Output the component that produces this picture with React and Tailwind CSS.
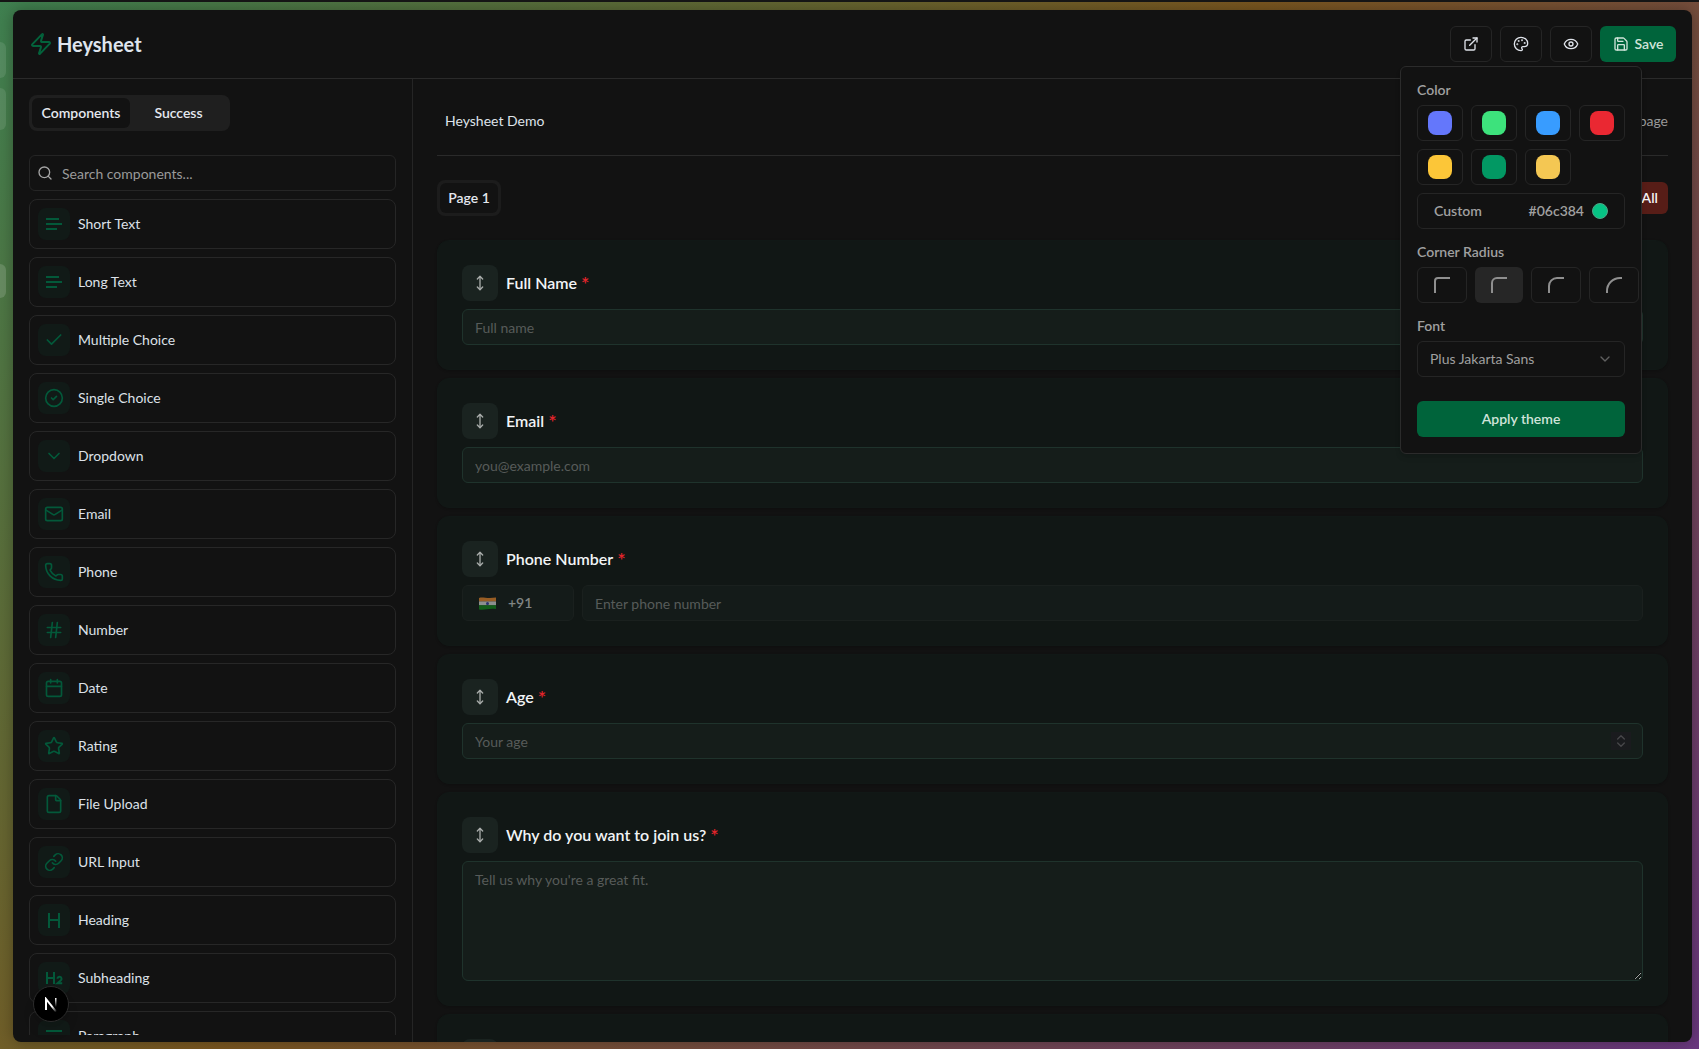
import React from "react";
import {
  Zap, ExternalLink, Palette, Eye, Save, Search, Check, CircleCheck, ChevronDown,
  Mail, Phone, Hash, Calendar, Star, File, Link, MoveVertical, ChevronsUpDown,
} from "lucide-react";

function TextLines({ className }) {
  return (
    <svg viewBox="0 0 20 20" className={className} fill="none" stroke="currentColor" strokeWidth="2">
      <path d="M2 5h13M2 10h16M2 15h11" />
    </svg>
  );
}

function HeadingIcon({ className }) {
  return (
    <svg viewBox="0 0 20 20" className={className} fill="none" stroke="currentColor" strokeWidth="2">
      <path d="M5 3v15M15 3v15M5 10h10" />
    </svg>
  );
}

function SubheadingIcon({ className }) {
  return (
    <svg viewBox="0 0 20 20" className={className} fill="none" stroke="currentColor" strokeWidth="2">
      <path d="M3 4v12M10 4v12M3 10h7M13.5 10.8a2 2 0 1 1 3.4 1.4L13.5 15.2H18.2" />
    </svg>
  );
}

function ParagraphIcon({ className }) {
  return (
    <svg viewBox="0 0 20 20" className={className} fill="none" stroke="currentColor" strokeWidth="2">
      <path d="M2 5h16M2 10h16M2 15h11" />
    </svg>
  );
}

const COMPONENTS = [
  ["Short Text", TextLines],
  ["Long Text", TextLines],
  ["Multiple Choice", Check],
  ["Single Choice", CircleCheck],
  ["Dropdown", ChevronDown],
  ["Email", Mail],
  ["Phone", Phone],
  ["Number", Hash],
  ["Date", Calendar],
  ["Rating", Star],
  ["File Upload", File],
  ["URL Input", Link],
  ["Heading", HeadingIcon],
  ["Subheading", SubheadingIcon],
  ["Paragraph", ParagraphIcon],
];

const SWATCHES = [
  ["Indigo", "bg-[#6477fb]"],
  ["Green", "bg-[#3de27c]"],
  ["Blue", "bg-[#389cff]"],
  ["Red", "bg-[#ea2832]"],
  ["Yellow", "bg-[#fcc638]"],
  ["Emerald", "bg-[#029863]"],
  ["Amber", "bg-[#f4c753]"],
];

const RADII = [
  ["Small", "M1 17V4a3 3 0 0 1 3-3h13"],
  ["Medium", "M1 17V6a5 5 0 0 1 5-5h11"],
  ["Large", "M1 17V9a8 8 0 0 1 8-8h8"],
  ["Full", "M1 17V14A13 13 0 0 1 14 1h3"],
];

const iconButton =
  "flex h-9 w-[42px] items-center justify-center rounded-md border border-[#252525] text-[#dfe3ea]";
const fieldBox =
  "w-full rounded-md border border-[#1f332c] bg-[#151d1a] px-3 text-sm text-[#ddd] placeholder:text-[#575b59]";

function Header() {
  return (
    <header className="flex items-center justify-between border-b border-[#2a2a2a] p-4">
      <div className="flex items-center gap-1 text-[#dfe5ee]">
        <Zap className="size-6 text-[#03623b]" strokeWidth={2} />
        <h1 className="text-xl font-bold">Heysheet</h1>
      </div>
      <div className="relative flex gap-2">
        <button aria-label="Open form" className={iconButton}><ExternalLink className="size-4" /></button>
        <button aria-label="Theme" className={iconButton}><Palette className="size-4" /></button>
        <button aria-label="Preview" className={iconButton}><Eye className="size-4" /></button>
        <button className="flex h-9 w-[76px] items-center justify-center gap-1.5 rounded-md bg-[#00643b] text-sm font-semibold text-[#cfe3d9]">
          <Save className="size-4" />Save
        </button>
        <ThemePopover />
      </div>
    </header>
  );
}

function ThemePopover() {
  return (
    <div className="absolute top-10 right-[34px] z-10 flex w-[242px] flex-col gap-4 rounded-md border border-[#2b2b2b] bg-[#121212] p-4 text-sm text-[#a0a0a0] shadow-md">
      <section className="flex flex-col gap-2">
        <h2 className="h-3.5 leading-3.5 font-semibold">Color</h2>
        <div className="grid grid-cols-4 gap-2">
          {SWATCHES.map(([name, color]) => (
            <button key={name} aria-label={name} className="flex h-9 items-center justify-center rounded-md border border-[#252525]">
              <span className={"size-6 rounded-lg " + color} />
            </button>
          ))}
        </div>
        <button className="flex h-9 items-center justify-between rounded-md border border-[#252525] px-4 font-semibold">
          <span>Custom</span>
          <span className="flex items-center gap-2">
            #06c384
            <span className="size-4 rounded-full border border-[#4fa587] bg-[#06c384]" />
          </span>
        </button>
      </section>
      <section className="flex flex-col gap-2">
        <h2 className="h-3.5 leading-3.5 font-semibold">Corner Radius</h2>
        <div className="flex gap-2">
          {RADII.map(([name, d], i) => (
            <button
              key={name}
              aria-label={name}
              className={
                i === 1
                  ? "flex h-9 w-12 shrink-0 items-center justify-center rounded-md bg-[#262626]"
                  : "flex h-9 w-[50px] shrink-0 items-center justify-center rounded-md border border-[#252525]"
              }
            >
              <svg viewBox="0 0 16 16" className="size-4" fill="none" stroke="#8f8f8f" strokeWidth="2">
                <path d={d} />
              </svg>
            </button>
          ))}
        </div>
      </section>
      <section className="flex flex-col gap-2">
        <label htmlFor="font" className="h-3.5 leading-3.5 font-semibold">Font</label>
        <div className="relative">
          <select id="font" className="h-9 w-full appearance-none rounded-md border border-[#252525] bg-transparent px-3">
            <option>Plus Jakarta Sans</option>
          </select>
          <ChevronDown className="pointer-events-none absolute top-2.5 right-3 size-4 text-[#606060]" />
        </div>
      </section>
      <button className="mt-2 h-9 rounded-md bg-[#00643b] font-semibold text-[#cfe3d9]">Apply theme</button>
    </div>
  );
}

function Sidebar() {
  return (
    <aside className="flex w-[400px] shrink-0 flex-col border-r border-[#252525] px-4 pt-4 pb-[7px]">
      <div role="tablist" className="flex h-9 w-[201px] shrink-0 rounded-lg bg-[#1f1f1f] p-[3px] text-sm font-semibold text-[#e4e8ef]">
        <button role="tab" aria-selected="true" className="w-[98px] rounded-md bg-[#121212]">Components</button>
        <button role="tab" aria-selected="false" className="flex-1">Success</button>
      </div>
      <div className="relative mt-6 shrink-0">
        <Search className="pointer-events-none absolute top-2.5 left-2 size-4 text-[#a5a5a5]" />
        <input aria-label="Search components" placeholder="Search components..." className="h-9 w-full rounded-md border border-[#252525] bg-transparent pr-3 pl-8 text-sm placeholder:text-[#9a9a9a]" />
      </div>
      <div className="mt-2 flex min-h-0 flex-1 flex-col gap-2 overflow-hidden">
        {COMPONENTS.map(([name, Icon]) => (
          <button key={name} className="flex shrink-0 items-center gap-2 rounded-lg border border-[#272727] p-2 text-left text-sm text-[#dde1e8]">
            <span className="flex size-8 items-center justify-center rounded-lg bg-[#111a17] text-[#03593a]">
              <Icon className="size-5" strokeWidth={2} />
            </span>
            {name}
          </button>
        ))}
      </div>
    </aside>
  );
}

function FieldCard({ id, label, children }) {
  return (
    <section className="flex shrink-0 flex-col gap-2 rounded-xl border border-[#111816] bg-[#111715] p-6 shadow-sm">
      <div className="flex items-center gap-2">
        <button aria-label="Move field" className="flex size-9 items-center justify-center rounded-lg bg-[#1a2320] text-[#a8acaa]">
          <MoveVertical className="size-4" />
        </button>
        {label && (
          <label htmlFor={id} className="flex gap-1 text-base font-semibold text-[#f1f4f6]">
            {label}
            <span className="text-xl leading-6 text-[#e3242b]">*</span>
          </label>
        )}
      </div>
      {children}
    </section>
  );
}

function Editor() {
  return (
    <main className="flex min-w-0 flex-1 flex-col overflow-hidden px-6">
      <div className="flex h-[77px] shrink-0 items-center justify-between border-b border-[#2a2a2a] pt-2 text-sm">
        <input aria-label="Form title" defaultValue="Heysheet Demo" className="bg-transparent px-2 text-[#dfe3ea]" />
        <span className="text-[#999]">1 page</span>
      </div>
      <div className="my-6 flex shrink-0 items-center justify-between text-sm font-semibold">
        <div role="tablist" className="flex h-9 rounded-lg bg-[#1c1c1c] p-[3px]">
          <button role="tab" aria-selected="true" className="w-[58px] rounded-md bg-[#121212] text-[#e4e8ef]">Page 1</button>
        </div>
        <button className="h-8 rounded-md bg-[#571d17] px-2.5 text-[#f3f3f3]">Clear All</button>
      </div>
      <div className="flex flex-col gap-2">
        <FieldCard id="name" label="Full Name">
          <input id="name" placeholder="Full name" className={fieldBox + " h-9"} />
        </FieldCard>
        <FieldCard id="email" label="Email">
          <input id="email" type="email" placeholder="you@example.com" className={fieldBox + " h-9"} />
        </FieldCard>
        <FieldCard id="phone" label="Phone Number">
          <div className="flex gap-2">
            <button aria-label="Country code" className="flex h-9 w-28 shrink-0 items-center gap-3 rounded-md border border-[#1a201e] bg-[#141b19] px-4 text-sm font-semibold text-[#818583]">
              <IndiaFlag />+91
            </button>
            <input id="phone" type="tel" placeholder="Enter phone number" className="h-9 min-w-0 flex-1 rounded-md border border-[#1a201e] bg-[#141b19] px-3 text-sm placeholder:text-[#575b59]" />
          </div>
        </FieldCard>
        <FieldCard id="age" label="Age">
          <div className="relative">
            <input id="age" inputMode="numeric" placeholder="Your age" className={fieldBox + " h-9"} />
            <span className="pointer-events-none absolute top-[9px] right-3 flex h-[18px] w-5 items-center justify-center bg-[#1a1b1e] text-[#47474a]">
              <ChevronsUpDown className="size-4" />
            </span>
          </div>
        </FieldCard>
        <FieldCard id="why" label="Why do you want to join us?">
          <textarea id="why" placeholder="Tell us why you're a great fit." className={fieldBox + " block h-[120px] py-2"} />
        </FieldCard>
        <FieldCard id="next">
          <input id="next" aria-label="Next field" className={fieldBox + " h-9"} />
        </FieldCard>
      </div>
    </main>
  );
}

function IndiaFlag() {
  return (
    <svg viewBox="0 0 17 13" className="h-[13px] w-[17px] opacity-60">
      <path d="M0 1C4-.5 7 2 17 .6V4.6H0Z" fill="#f08a2c" />
      <path d="M0 4.4H17V8.4H0Z" fill="#dcdcdc" />
      <path d="M0 8.3H17V12C9 11 6 13.500 0 12.400Z" fill="#128a1a" />
      <circle cx="8.500" cy="6.400" r="1.500" fill="#3b41a8" />
    </svg>
  );
}

function NextBadge() {
  return (
    <button aria-label="Developer tools" className="absolute bottom-[27px] left-[33px] flex size-9 items-center justify-center rounded-full border border-[#2b2b2b] bg-black shadow-lg">
      <svg viewBox="0 0 14 15" className="h-[15px] w-3.5" fill="none" strokeWidth="2">
        <defs>
          <linearGradient id="fadeRight" x1="0" y1="0" x2="0" y2="1">
            <stop offset="0" stopColor="#fff" />
            <stop offset="1" stopColor="#fff" stopOpacity="0" />
          </linearGradient>
          <linearGradient id="fadeDiagonal" x1="0" y1="0" x2="1" y2="1">
            <stop offset="0.6" stopColor="#fff" />
            <stop offset="1" stopColor="#fff" stopOpacity="0.1" />
          </linearGradient>
        </defs>
        <path d="M2 13V2L12 14.500" stroke="url(#fadeDiagonal)" />
        <path d="M11 1h1.500v9H11Z" fill="url(#fadeRight)" />
      </svg>
    </button>
  );
}

export default function App() {
  return (
    <div className="relative h-screen overflow-hidden border-t-2 border-[#151515] bg-linear-[135deg,#3f8050_0%,#7a5720_46%,#6a387f_100%] pt-2 pr-[7px] pb-[7px] pl-[13px] font-[Lato,'Open_Sans',sans-serif]">
      <div className="absolute top-10 left-0 h-9 w-1.5 rounded-r-lg bg-white/10" />
      <div className="absolute top-[86px] left-0 h-[42px] w-1.5 rounded-r-lg bg-white/10" />
      <div className="absolute top-[262px] left-0 h-[34px] w-1.5 rounded-r-lg bg-white/15" />
      <div className="flex h-full flex-col overflow-hidden rounded-lg bg-[#121212] shadow-[0_0_16px_rgba(0,0,0,0.3)]">
        <Header />
        <div className="flex min-h-0 flex-1">
          <Sidebar />
          <Editor />
        </div>
      </div>
      <NextBadge />
    </div>
  );
}
